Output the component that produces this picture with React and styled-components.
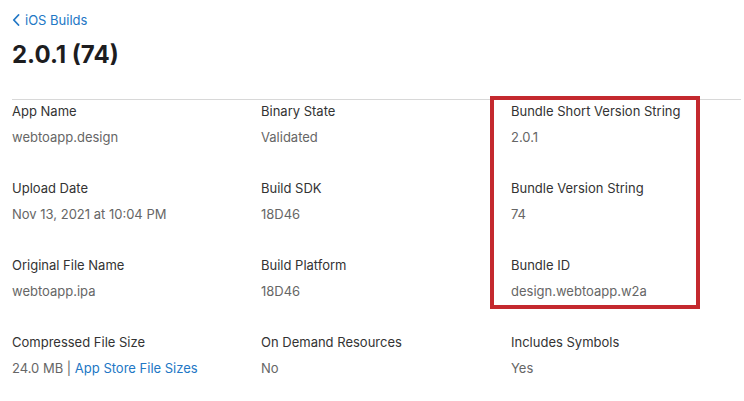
import React from "react";
import styled, { createGlobalStyle } from "styled-components";

const GlobalStyle = createGlobalStyle`
  body {
    margin: 0;
    background: #ffffff;
    font-family: Inter, "Noto Sans", "Liberation Sans", sans-serif;
    -webkit-font-smoothing: antialiased;
  }
`;

const Page = styled.div`
  position: relative;
  padding: 10px 3px 0 12px;
`;

const BackLink = styled.a`
  display: inline-flex;
  align-items: center;
  gap: 5px;
  color: #2277c5;
  font-size: 13px;
  text-decoration: none;
  height: 18px;
`;

const Title = styled.h1`
  margin: 10px 0 0;
  font-size: 24px;
  font-weight: 700;
  color: #1d1d1f;
  line-height: 30px;
`;

const Divider = styled.hr`
  margin: 29px 0 0;
  border: none;
  border-top: 1px solid #d8d8d8;
`;

const Grid = styled.div`
  display: grid;
  grid-template-columns: 249px 250px 1fr;
  row-gap: 33px;
  padding-top: 2px;
`;

const Field = styled.div`
  display: flex;
  flex-direction: column;
  gap: 8px;
`;

const Label = styled.div`
  font-size: 13px;
  line-height: 18px;
  color: #333333;
`;

const Value = styled.div`
  font-size: 13px;
  line-height: 18px;
  color: #666666;
`;

const Link = styled.a`
  color: #2277c5;
  text-decoration: none;
`;

const Highlight = styled.div`
  position: absolute;
  left: 490px;
  top: 96px;
  width: 202px;
  height: 205px;
  border: 4px solid #c4292e;
  pointer-events: none;
`;

const Chevron = () => (
  <svg width="8" height="12" viewBox="0 0 8 12">
    <path d="M6.5 1 L1.8 6 L6.5 11" fill="none" stroke="#2277c5" strokeWidth="1.8" strokeLinecap="round" strokeLinejoin="round" />
  </svg>
);

const fields = [
  ["App Name", "webtoapp.design"],
  ["Binary State", "Validated"],
  ["Bundle Short Version String", "2.0.1"],
  ["Upload Date", "Nov 13, 2021 at 10:04 PM"],
  ["Build SDK", "18D46"],
  ["Bundle Version String", "74"],
  ["Original File Name", "webtoapp.ipa"],
  ["Build Platform", "18D46"],
  ["Bundle ID", "design.webtoapp.w2a"],
  [
    "Compressed File Size",
    <>
      24.0 MB | <Link href="#">App Store File Sizes</Link>
    </>,
  ],
  ["On Demand Resources", "No"],
  ["Includes Symbols", "Yes"],
];

export default function App() {
  return (
    <>
      <GlobalStyle />
      <Page>
        <BackLink href="#">
          <Chevron />
          iOS Builds
        </BackLink>
        <Title>2.0.1 (74)</Title>
        <Divider />
        <Grid>
          {fields.map(([label, value], i) => (
            <Field key={i}>
              <Label>{label}</Label>
              <Value>{value}</Value>
            </Field>
          ))}
        </Grid>
        <Highlight />
      </Page>
    </>
  );
}
